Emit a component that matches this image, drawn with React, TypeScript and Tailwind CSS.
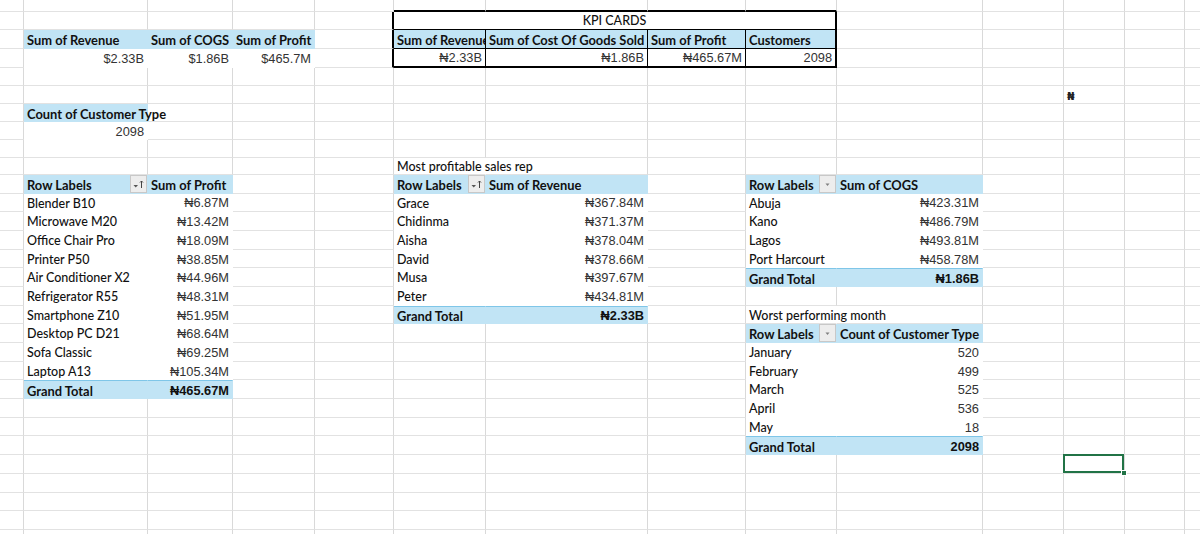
import React from "react";

type Spec = { c: number; span?: number; cls?: string; el?: React.ReactNode };

const COLS =
  "grid grid-cols-[24px_124px_85px_82px_79px_92px_162px_98px_91px_146px_81px_61px_60px_80px]";

const GRID = "border-r border-b border-r-[#d9d9d9] border-b-[#e2e2e2]";
const WHITE = "bg-white border-r border-b border-white";
const BAND = "bg-[#c1e4f5] border-r border-b border-[#c1e4f5]";
const TOTAL =
  "bg-[#c1e4f5] border-t border-r border-b border-t-[#7fc6e8] border-r-[#c1e4f5] border-b-[#c1e4f5]";
const KTOP = "border-r border-b-2 border-r-[#d9d9d9] border-b-black";
const KLEFT = "border-r-2 border-b border-r-black border-b-[#e2e2e2]";
const KH = "bg-[#c1e4f5] border-r border-b border-black overflow-hidden";
const KHR = "bg-[#c1e4f5] border-r-2 border-b border-black overflow-hidden";
const KV = "bg-white border-r border-b-2 border-black overflow-hidden";
const KVR = "bg-white border-r-2 border-b-2 border-black overflow-hidden";

const HEIGHTS = [
  "h-[12px]",
  "h-[18px]",
  "h-[19px]",
  "h-[18.5px]",
  "h-[18.5px]",
  "h-[18px]",
  "h-[18px]",
  "h-[18px]",
  "h-[17.5px]",
  "h-[17.5px]",
  "h-[18.5px]",
  "h-[18.7px]",
  "h-[18.7px]",
  "h-[18.7px]",
  "h-[18.7px]",
  "h-[18.7px]",
  "h-[18.7px]",
  "h-[18.7px]",
  "h-[18.7px]",
  "h-[18.7px]",
  "h-[18.7px]",
  "h-[18.7px]",
  "h-[18.7px]",
  "h-[18.7px]",
  "h-[18.7px]",
  "h-[18.7px]",
  "h-[18.7px]",
  "h-[18.7px]",
  "h-[18.7px]",
  "h-[18.7px]",
];

function L({ children, b }: { children: React.ReactNode; b?: boolean }) {
  return (
    <div
      className={`flex h-full items-center whitespace-nowrap px-[3px] pt-[3px] font-['Lato',sans-serif] leading-none text-[#111] ${
        b ? "text-[12.9px] font-bold" : "text-[12.5px] font-medium"
      }`}
    >
      {children}
    </div>
  );
}

function N({ children, b }: { children: React.ReactNode; b?: boolean }) {
  return (
    <div
      className={`flex h-full items-center justify-end whitespace-nowrap px-[3px] pt-[3px] font-['Liberation_Sans','DejaVu_Sans',sans-serif] text-[12.8px] leading-none ${
        b ? "font-bold text-[#111]" : "font-normal text-[#333]"
      }`}
    >
      {children}
    </div>
  );
}

function FilterBtn({ sort }: { sort?: boolean }) {
  return (
    <div className="ml-auto flex h-full w-[17px] shrink-0 items-center justify-center border border-[#c8c8c8] bg-[#ededed]">
      <svg width="13" height="12" viewBox="0 0 13 12">
        {sort ? (
          <>
            <path d="M1.5 7 L6 7 L3.75 9.5 Z" fill="#555" />
            <path d="M9.5 10 V3 M8 4.5 L9.5 3 L11 4.5" stroke="#444" strokeWidth="1" fill="none" />
          </>
        ) : (
          <path d="M4.5 5.5 L8.5 5.5 L6.5 8 Z" fill="#808080" />
        )}
      </svg>
    </div>
  );
}

function RowLabels({ sort }: { sort?: boolean }) {
  return (
    <div className="flex h-full items-center pl-[3px] font-['Lato',sans-serif] text-[12.9px] font-bold leading-none text-[#111]">
      <span className="whitespace-nowrap pt-[3px]">Row Labels</span>
      <FilterBtn sort={sort} />
    </div>
  );
}

function Row({ h, specs }: { h: string; specs: Spec[] }) {
  const map = new Map<number, Spec>();
  specs.forEach((s) => map.set(s.c, s));
  const out: React.ReactNode[] = [];
  let c = 0;
  while (c < 14) {
    const s = map.get(c);
    if (s) {
      out.push(
        <div key={c} className={`${s.span === 4 ? "col-span-4" : ""} ${s.cls ?? GRID}`}>
          {s.el}
        </div>
      );
      c += s.span ?? 1;
    } else {
      out.push(<div key={c} className={GRID} />);
      c += 1;
    }
  }
  return <div className={`${COLS} ${h}`}>{out}</div>;
}

const products: [string, string][] = [
  ["Blender B10", "₦6.87M"],
  ["Microwave M20", "₦13.42M"],
  ["Office Chair Pro", "₦18.09M"],
  ["Printer P50", "₦38.85M"],
  ["Air Conditioner X2", "₦44.96M"],
  ["Refrigerator R55", "₦48.31M"],
  ["Smartphone Z10", "₦51.95M"],
  ["Desktop PC D21", "₦68.64M"],
  ["Sofa Classic", "₦69.25M"],
  ["Laptop A13", "₦105.34M"],
];

const reps: [string, string][] = [
  ["Grace", "₦367.84M"],
  ["Chidinma", "₦371.37M"],
  ["Aisha", "₦378.04M"],
  ["David", "₦378.66M"],
  ["Musa", "₦397.67M"],
  ["Peter", "₦434.81M"],
];

const cities: [string, string][] = [
  ["Abuja", "₦423.31M"],
  ["Kano", "₦486.79M"],
  ["Lagos", "₦493.81M"],
  ["Port Harcourt", "₦458.78M"],
];

const months: [string, string][] = [
  ["January", "520"],
  ["February", "499"],
  ["March", "525"],
  ["April", "536"],
  ["May", "18"],
];

function buildRows(): Spec[][] {
  const rows: Spec[][] = HEIGHTS.map(() => []);

  [5, 6, 7, 8].forEach((c) => rows[0].push({ c, cls: KTOP }));

  rows[1].push({ c: 4, cls: KLEFT });
  rows[1].push({
    c: 5,
    span: 4,
    cls: "bg-white border-r-2 border-b border-black",
    el: (
      <div className="flex h-full items-center justify-center pt-[2px] font-['Lato',sans-serif] text-[12.5px] font-medium leading-none text-[#111]">
        KPI CARDS
      </div>
    ),
  });

  rows[2].push({ c: 1, cls: BAND, el: <L b>Sum of Revenue</L> });
  rows[2].push({ c: 2, cls: BAND, el: <L b>Sum of COGS</L> });
  rows[2].push({ c: 3, cls: BAND, el: <L b>Sum of Profit</L> });
  rows[2].push({ c: 4, cls: KLEFT });
  rows[2].push({ c: 5, cls: KH, el: <L b>Sum of Revenue</L> });
  rows[2].push({ c: 6, cls: KH, el: <L b>Sum of Cost Of Goods Sold</L> });
  rows[2].push({ c: 7, cls: KH, el: <L b>Sum of Profit</L> });
  rows[2].push({ c: 8, cls: KHR, el: <L b>Customers</L> });

  rows[3].push({ c: 1, cls: WHITE, el: <N>$2.33B</N> });
  rows[3].push({ c: 2, cls: WHITE, el: <N>$1.86B</N> });
  rows[3].push({ c: 3, cls: WHITE, el: <N>$465.7M</N> });
  rows[3].push({ c: 4, cls: KLEFT });
  rows[3].push({ c: 5, cls: KV, el: <N>₦2.33B</N> });
  rows[3].push({ c: 6, cls: KV, el: <N>₦1.86B</N> });
  rows[3].push({ c: 7, cls: KV, el: <N>₦465.67M</N> });
  rows[3].push({ c: 8, cls: KVR, el: <N>2098</N> });

  rows[5].push({
    c: 11,
    el: (
      <div className="flex h-full items-center px-[3px] pt-[3px] font-['DejaVu_Sans',sans-serif] text-[11px] font-bold leading-none text-[#222]">
        ₦
      </div>
    ),
  });

  rows[6].push({ c: 1, cls: `${BAND} relative z-10`, el: <L b>Count of Customer Type</L> });
  rows[7].push({ c: 1, cls: WHITE, el: <N>2098</N> });

  rows[9].push({
    c: 5,
    cls: "border-r border-b border-r-transparent border-b-[#e2e2e2]",
    el: <L>Most profitable sales rep</L>,
  });

  rows[10].push({ c: 1, cls: BAND, el: <RowLabels sort /> });
  rows[10].push({ c: 2, cls: BAND, el: <L b>Sum of Profit</L> });
  rows[10].push({ c: 5, cls: BAND, el: <RowLabels sort /> });
  rows[10].push({ c: 6, cls: BAND, el: <L b>Sum of Revenue</L> });
  rows[10].push({ c: 8, cls: BAND, el: <RowLabels /> });
  rows[10].push({ c: 9, cls: BAND, el: <L b>Sum of COGS</L> });

  products.forEach(([n, v], i) => {
    rows[11 + i].push({ c: 1, cls: WHITE, el: <L>{n}</L> });
    rows[11 + i].push({ c: 2, cls: WHITE, el: <N>{v}</N> });
  });
  rows[21].push({ c: 1, cls: TOTAL, el: <L b>Grand Total</L> });
  rows[21].push({ c: 2, cls: TOTAL, el: <N b>₦465.67M</N> });

  reps.forEach(([n, v], i) => {
    rows[11 + i].push({ c: 5, cls: WHITE, el: <L>{n}</L> });
    rows[11 + i].push({ c: 6, cls: WHITE, el: <N>{v}</N> });
  });
  rows[17].push({ c: 5, cls: TOTAL, el: <L b>Grand Total</L> });
  rows[17].push({ c: 6, cls: TOTAL, el: <N b>₦2.33B</N> });

  cities.forEach(([n, v], i) => {
    rows[11 + i].push({ c: 8, cls: WHITE, el: <L>{n}</L> });
    rows[11 + i].push({ c: 9, cls: WHITE, el: <N>{v}</N> });
  });
  rows[15].push({ c: 8, cls: TOTAL, el: <L b>Grand Total</L> });
  rows[15].push({ c: 9, cls: TOTAL, el: <N b>₦1.86B</N> });

  rows[17].push({
    c: 8,
    cls: "border-r border-b border-r-transparent border-b-[#e2e2e2]",
    el: <L>Worst performing month</L>,
  });
  rows[18].push({ c: 8, cls: BAND, el: <RowLabels /> });
  rows[18].push({ c: 9, cls: BAND, el: <L b>Count of Customer Type</L> });
  months.forEach(([n, v], i) => {
    rows[19 + i].push({ c: 8, cls: WHITE, el: <L>{n}</L> });
    rows[19 + i].push({ c: 9, cls: WHITE, el: <N>{v}</N> });
  });
  rows[24].push({ c: 8, cls: TOTAL, el: <L b>Grand Total</L> });
  rows[24].push({ c: 9, cls: TOTAL, el: <N b>2098</N> });

  rows[25].push({
    c: 11,
    cls: `${GRID} relative`,
    el: (
      <>
        <div className="absolute -left-px -top-px h-[calc(100%+1px)] w-[calc(100%+1px)] border-2 border-[#217346]" />
        <div className="absolute -bottom-[3px] -right-[3px] h-[6px] w-[6px] border border-white bg-[#217346]" />
      </>
    ),
  });

  return rows;
}

export default function App() {
  const rows = buildRows();
  return (
    <div className="h-[534px] w-[1200px] overflow-hidden bg-white">
      {rows.map((specs, i) => (
        <Row key={i} h={HEIGHTS[i]} specs={specs} />
      ))}
    </div>
  );
}
